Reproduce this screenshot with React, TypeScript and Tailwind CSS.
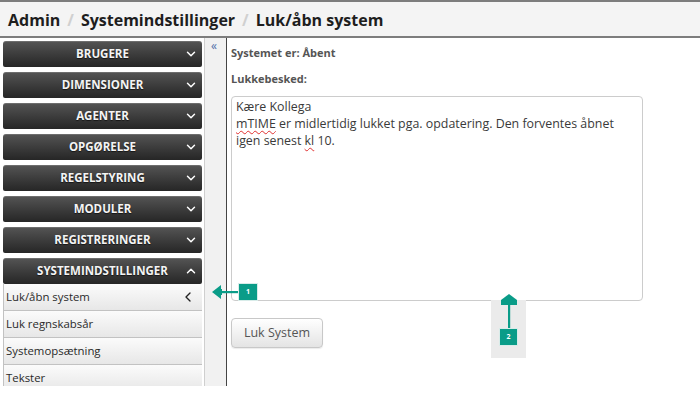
import React from "react";
import { ChevronDown, ChevronUp, ChevronLeft } from "lucide-react";

const sections = [
  "BRUGERE",
  "DIMENSIONER",
  "AGENTER",
  "OPGØRELSE",
  "REGELSTYRING",
  "MODULER",
  "REGISTRERINGER",
];

const subItems = ["Luk/åbn system", "Luk regnskabsår", "Systemopsætning", "Tekster"];

function SectionButton({ label, open }: { label: string; open?: boolean }) {
  return (
    <div className="relative flex h-[26px] w-full items-center justify-center rounded-t-[3px] rounded-b-[2px] bg-gradient-to-b from-[#555555] to-[#262626] shadow-[inset_0_1px_0_rgba(255,255,255,0.15)]">
      <span className="text-[11.5px] font-bold text-[#f4f4f4] [text-shadow:0_1px_1px_rgba(0,0,0,0.6)]">
        {label}
      </span>
      <span className="absolute right-[4px] top-[6px] text-white">
        {open ? <ChevronUp size={14} strokeWidth={2.5} /> : <ChevronDown size={14} strokeWidth={2.5} />}
      </span>
    </div>
  );
}

export default function App() {
  return (
    <div className="w-[700px] bg-white font-['Open_Sans',sans-serif]">
      {/* Header */}
      <div className="flex h-[38px] items-center border-t-2 border-b-2 border-t-[#7d7d7d] border-b-[#7d7d7d] bg-[#f4f4f4] pl-[8px] pt-[1px]">
        <span className="text-[16px] font-bold text-[#1e1e1e]">Admin</span>
        <span className="mx-[7px] text-[16px] font-bold text-[#d0d0d0]">/</span>
        <span className="text-[16px] font-bold text-[#1e1e1e]">Systemindstillinger</span>
        <span className="mx-[7px] text-[16px] font-bold text-[#d0d0d0]">/</span>
        <span className="text-[16px] font-bold text-[#1e1e1e]">Luk/åbn system</span>
      </div>

      {/* Body */}
      <div className="relative flex h-[348px]">
        {/* Sidebar */}
        <div className="flex w-[205px] flex-col overflow-hidden border-r border-[#cfcfcf] bg-white pl-[3px] pr-[2px] pt-[3px]">
          <div className="flex flex-col gap-[5px]">
            {sections.map((s) => (
              <SectionButton key={s} label={s} />
            ))}
            <div className="flex flex-col">
              <SectionButton label="SYSTEMINDSTILLINGER" open />
              {subItems.map((item, i) => (
                <div
                  key={item}
                  className="flex h-[27px] shrink-0 items-center justify-between border-b border-l border-[#c2c2c2] bg-gradient-to-b from-[#fbfbfb] to-[#e7e7e7] pl-[2px] pr-[6px]"
                >
                  <span className="text-[11.4px] text-[#2a2a2a]">{item}</span>
                  {i === 0 && <ChevronLeft size={16} strokeWidth={2} className="text-[#222]" />}
                </div>
              ))}
            </div>
          </div>
        </div>

        {/* Collapse column */}
        <div className="w-[22px] border-r border-[#444444] bg-[#f1f1f1] pr-[3px] pt-[1px] text-center">
          <div className="text-[12px] leading-[14px] text-[#4f6fa8]">«</div>
        </div>

        {/* Content */}
        <div className="flex flex-1 flex-col pl-[4px] pt-[7px]">
          <div className="text-[11px] font-bold leading-[16px] text-[#555]">Systemet er: Åbent</div>
          <div className="mt-[10px] text-[11px] font-bold leading-[16px] text-[#555]">Lukkebesked:</div>
          <div className="mt-[9px] h-[205px] w-[412px] rounded-[4px] border border-[#cccccc] bg-white px-[4px] pt-[1px] text-[12.4px] leading-[17px] text-[#3a3a3a]">
            <div className="h-[17px]">Kære Kollega</div>
            <div className="h-[17px]">
              <span className="underline decoration-wavy decoration-[#e03030] decoration-1 underline-offset-2">mTIME</span> er midlertidig lukket pga. opdatering. Den forventes åbnet
            </div>
            <div className="h-[17px]">
              igen senest <span className="underline decoration-wavy decoration-[#e03030] decoration-1 underline-offset-2">kl</span> 10.
            </div>
          </div>
          <div className="mt-[17px]">
            <button className="h-[30px] w-[92px] rounded-[4px] border border-[#c8c8c8] bg-gradient-to-b from-[#ffffff] to-[#e4e4e4] text-[12.5px] text-[#555] shadow-[0_1px_1px_rgba(0,0,0,0.08)]">
              Luk System
            </button>
          </div>
        </div>

        {/* Annotation 1 */}
        <div className="absolute left-[212px] top-[245px] flex items-center">
          <svg width="28" height="16" viewBox="0 0 28 16">
            <polygon points="0,8 9,1 9,5 10,5 10,11 9,11 9,15" fill="#0a9c88" />
            <rect x="9" y="7" width="19" height="2.2" fill="#0a9c88" />
          </svg>
          <div className="-ml-[2px] flex h-[18px] w-[20px] items-center justify-center border border-[#d8ece9] bg-[#0a9c88] text-[7px] font-bold text-white">
            1
          </div>
        </div>

        {/* Annotation 2 */}
        <div className="absolute left-[491px] top-[262px] flex h-[58px] w-[35px] flex-col items-center bg-[#ebebeb]">
          <svg width="18" height="34" viewBox="0 0 18 34" className="-mt-[6px]">
            <polygon points="9,0 17,6 17,11 1,11 1,6" fill="#0a9c88" />
            <rect x="8" y="10" width="2.2" height="24" fill="#0a9c88" />
          </svg>
          <div className="flex h-[18px] w-[19px] items-center justify-center border border-[#d8ece9] bg-[#0a9c88] text-[7px] font-bold text-white">
            2
          </div>
        </div>
      </div>
    </div>
  );
}
